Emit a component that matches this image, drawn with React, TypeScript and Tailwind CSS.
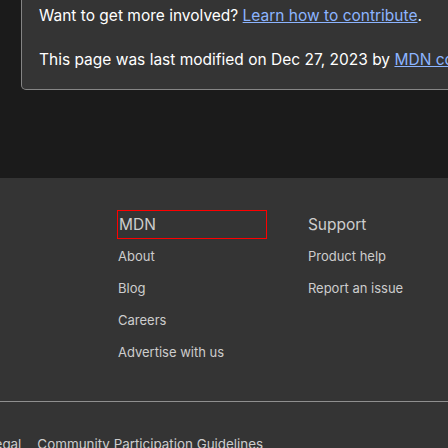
const mdnLinks = ["About", "Blog", "Careers", "Advertise with us"];
const supportLinks = ["Product help", "Report an issue"];

export default function App() {
  return (
    <div className="w-[448px] h-[448px] overflow-hidden bg-[#1b1b1b] text-white font-['Inter','Noto_Sans',sans-serif]">
      <div className="ml-[21px] w-[470px] h-[90px] bg-[#343434] border border-t-0 border-[#858585] rounded-b-[5px] pl-[17px] pt-[4px] text-[15.5px] leading-6">
        <p>
          Want to get more involved?{" "}
          <a className="text-[#8cb4ff] underline">Learn how to contribute</a>.
        </p>
        <p className="mt-[20px] whitespace-nowrap">
          This page was last modified on Dec 27, 2023 by{" "}
          <a className="text-[#8cb4ff] underline">MDN contributors</a>.
        </p>
      </div>

      <footer className="mt-[88px] bg-[#343434] text-[#cdcdcd] h-[300px]">
        <div className="flex pt-[32px] pl-[117px]">
          <div className="w-[214px]">
            <h2 className="h-[29px] border border-[#ff0000] pl-px flex items-center text-[15.5px]">MDN</h2>
            <ul className="mt-[2px] text-[13px]">
              {mdnLinks.map((l) => (
                <li key={l} className="h-8 flex items-center pl-px">{l}</li>
              ))}
            </ul>
          </div>
          <div className="ml-[41px] w-[200px]">
            <h2 className="h-[29px] flex items-center text-[15.5px] whitespace-nowrap">Support</h2>
            <ul className="mt-[2px] text-[13px]">
              {supportLinks.map((l) => (
                <li key={l} className="h-8 flex items-center whitespace-nowrap">{l}</li>
              ))}
            </ul>
          </div>
        </div>
        <div className="mt-[32px] border-t border-[#8f8f8f]" />
        <div className="flex gap-4 -ml-[13px] mt-[32px] text-[13.4px] whitespace-nowrap">
          <span>Legal</span>
          <span>Community Participation Guidelines</span>
        </div>
      </footer>
    </div>
  );
}
